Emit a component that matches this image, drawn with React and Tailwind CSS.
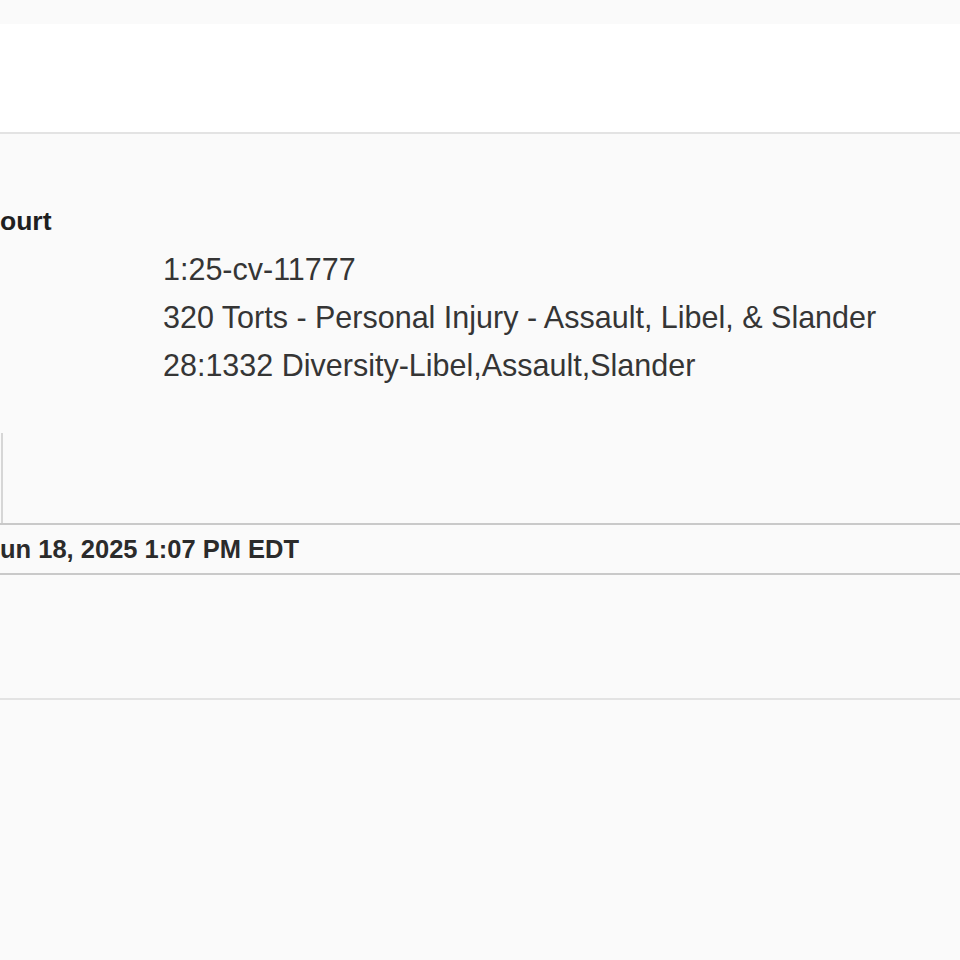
export default function App() {
  const rows = [
    "1:25-cv-11777",
    "320 Torts - Personal Injury - Assault, Libel, & Slander",
    "28:1332 Diversity-Libel,Assault,Slander",
  ];

  return (
    <div className="min-h-[960px] bg-[#fafafa] overflow-hidden font-['Liberation_Sans',Arial,sans-serif]">
      {/* top strip + white header band */}
      <div className="h-[24px] bg-[#fafafa]" />
      <div className="h-[108px] bg-white" />
      <div className="h-[2px] bg-[#e3e3e3]" />

      {/* case header */}
      <div className="pt-[70px]">
        <h2 className="text-[26.5px] leading-[34px] font-bold text-[#1f1f1f] whitespace-nowrap">
          ourt
        </h2>
        <div className="mt-[7px] pl-[163px]">
          {rows.map((r) => (
            <div key={r} className="text-[30.5px] leading-[48px] text-[#353535] whitespace-nowrap">
              {r}
            </div>
          ))}
        </div>
      </div>

      {/* edge of box */}
      <div className="mt-[44px] h-[90px] w-[3px] border-r-2 border-[#d6d6d6]" />

      {/* date row */}
      <div className="border-y-2 border-[#c9c9c9] h-[52px]">
        <div className="text-[25.5px] leading-[48px] font-bold text-[#2b2b2b] whitespace-nowrap">
          un 18, 2025 1:07 PM EDT
        </div>
      </div>

      <div className="h-[123px]" />
      <div className="h-[2px] bg-[#e3e3e3]" />
    </div>
  );
}
